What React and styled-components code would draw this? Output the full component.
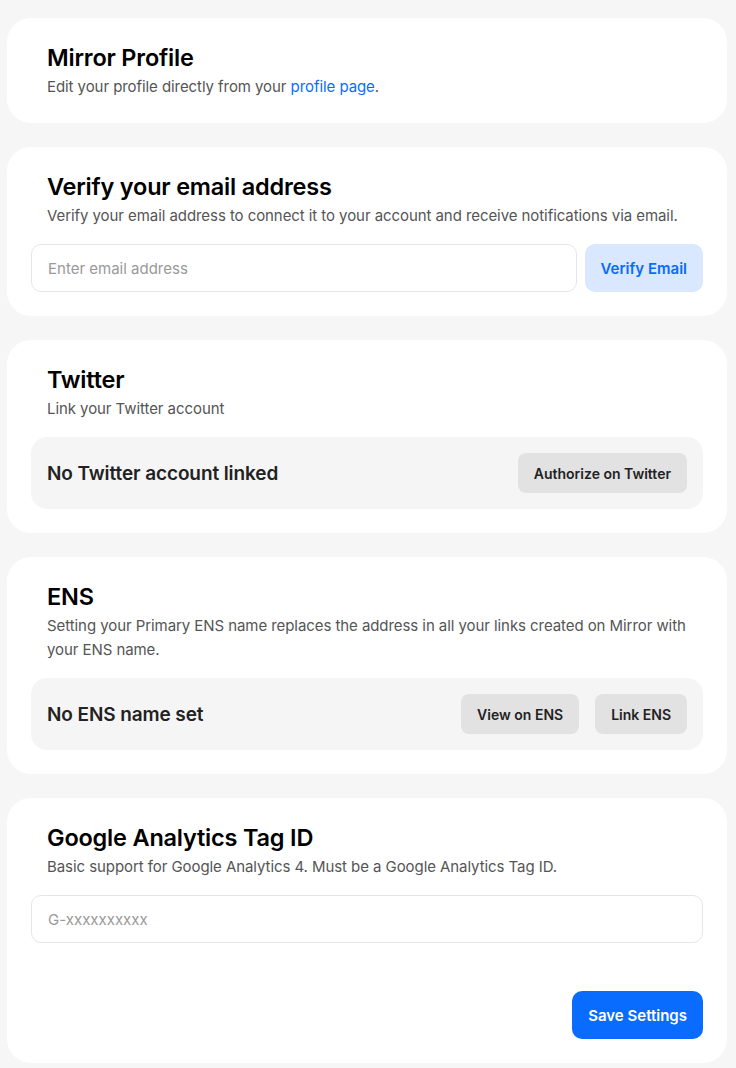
import React from "react";
import styled, { createGlobalStyle } from "styled-components";

const GlobalStyle = createGlobalStyle`
  * {
    box-sizing: border-box;
  }
  body {
    margin: 0;
    background: #f6f6f6;
    font-family: Inter, "Noto Sans", sans-serif;
    color: #000;
  }
`;

const Page = styled.div`
  display: flex;
  flex-direction: column;
  gap: 24px;
  padding: 18px 9px 8px 7px;
`;

const Card = styled.section`
  background: #fff;
  border-radius: 24px;
  padding: 24px;
  display: flex;
  flex-direction: column;
`;

const Header = styled.div`
  padding: 0 16px;
`;

const Title = styled.h2`
  margin: 0;
  font-size: 23.5px;
  line-height: 31px;
  font-weight: 600;
  letter-spacing: -0.2px;
  color: #000;
`;

const Description = styled.p`
  margin: 2px 0 0;
  font-size: 15px;
  line-height: 24px;
  letter-spacing: -0.07px;
  color: #555;
`;

const Link = styled.a`
  color: #0a6cff;
  text-decoration: none;
`;

const Body = styled.div`
  margin-top: 16px;
`;

const InputRow = styled.div`
  display: flex;
  gap: 8px;
`;

const Input = styled.input`
  flex: 1;
  height: 48px;
  padding: 0 16px;
  border: 1px solid #e6e6e6;
  border-radius: 10px;
  font-family: inherit;
  font-size: 15px;
  color: #222;
  outline: none;
  &::placeholder {
    color: #999;
  }
`;

const Button = styled.button`
  height: ${(p) => (p.$small ? "40px" : "48px")};
  padding: 0 16px;
  border: none;
  border-radius: ${(p) => (p.$small ? "8px" : "10px")};
  font-family: inherit;
  font-size: ${(p) => (p.$small ? "14px" : "15px")};
  font-weight: 600;
  cursor: pointer;
  white-space: nowrap;
  background: ${(p) =>
    p.$variant === "primary"
      ? "#0a6cff"
      : p.$variant === "soft"
      ? "#d9e8fe"
      : "#e2e2e2"};
  color: ${(p) =>
    p.$variant === "primary"
      ? "#fff"
      : p.$variant === "soft"
      ? "#0a6cff"
      : "#222"};
`;

const StatusBox = styled.div`
  height: 72px;
  display: flex;
  align-items: center;
  justify-content: space-between;
  padding: 0 16px;
  background: #f5f5f5;
  border-radius: 16px;
`;

const StatusText = styled.span`
  font-size: 19px;
  font-weight: 600;
  letter-spacing: -0.1px;
  color: #222;
`;

const Actions = styled.div`
  display: flex;
  gap: 16px;
`;

const Footer = styled.div`
  display: flex;
  justify-content: flex-end;
  margin-top: 48px;
`;

const SettingsCard = ({ title, description, children }) => (
  <Card>
    <Header>
      <Title>{title}</Title>
      <Description>{description}</Description>
    </Header>
    {children}
  </Card>
);

export default function App() {
  return (
    <>
      <GlobalStyle />
      <Page>
        <SettingsCard
          title="Mirror Profile"
          description={
            <>
              Edit your profile directly from your{" "}
              <Link href="#">profile page</Link>.
            </>
          }
        />

        <SettingsCard
          title="Verify your email address"
          description="Verify your email address to connect it to your account and receive notifications via email."
        >
          <Body>
            <InputRow>
              <Input placeholder="Enter email address" />
              <Button $variant="soft">Verify Email</Button>
            </InputRow>
          </Body>
        </SettingsCard>

        <SettingsCard title="Twitter" description="Link your Twitter account">
          <Body>
            <StatusBox>
              <StatusText>No Twitter account linked</StatusText>
              <Button $small>Authorize on Twitter</Button>
            </StatusBox>
          </Body>
        </SettingsCard>

        <SettingsCard
          title="ENS"
          description="Setting your Primary ENS name replaces the address in all your links created on Mirror with your ENS name."
        >
          <Body>
            <StatusBox>
              <StatusText>No ENS name set</StatusText>
              <Actions>
                <Button $small>View on ENS</Button>
                <Button $small>Link ENS</Button>
              </Actions>
            </StatusBox>
          </Body>
        </SettingsCard>

        <SettingsCard
          title="Google Analytics Tag ID"
          description="Basic support for Google Analytics 4. Must be a Google Analytics Tag ID."
        >
          <Body>
            <InputRow>
              <Input placeholder="G-xxxxxxxxxx" />
            </InputRow>
          </Body>
          <Footer>
            <Button $variant="primary">Save Settings</Button>
          </Footer>
        </SettingsCard>
      </Page>
    </>
  );
}
